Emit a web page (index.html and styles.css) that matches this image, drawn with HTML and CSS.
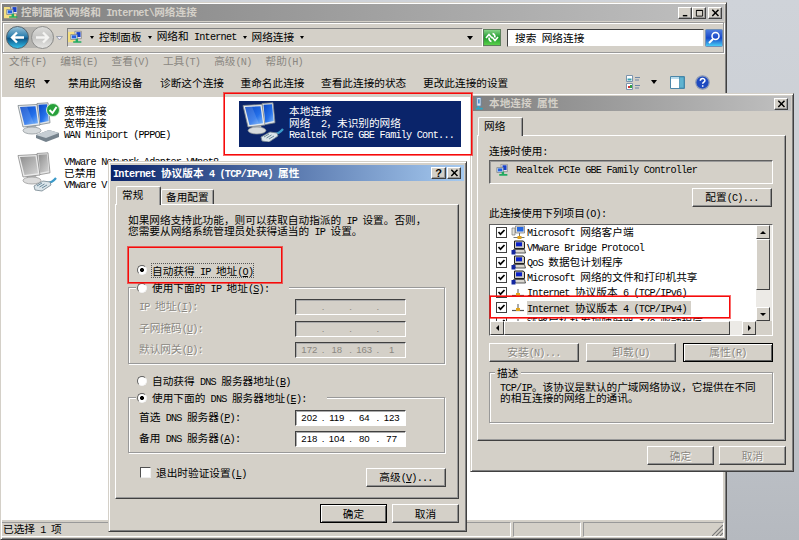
FILE: index.html
```html
<!DOCTYPE html>
<html lang="zh-CN">
<head>
<meta charset="utf-8">
<title>网络连接</title>
<link rel="stylesheet" href="styles.css">
</head>
<body>
<svg class="defs" width="0" height="0">
  <defs>
    <linearGradient id="scr" x1="0" y1="0" x2="1" y2="1"><stop offset="0" stop-color="#0846c4"/><stop offset=".6" stop-color="#2470ea"/><stop offset="1" stop-color="#84bcfa"/></linearGradient>
    <linearGradient id="gscr" x1="0" y1="0" x2="1" y2="1"><stop offset="0" stop-color="#8e8e8e"/><stop offset="1" stop-color="#d4d4d4"/></linearGradient>
    <linearGradient id="ball" x1="0" y1="0" x2="0" y2="1"><stop offset="0" stop-color="#9cc4da"/><stop offset=".45" stop-color="#2d7fae"/><stop offset=".55" stop-color="#0c5689"/><stop offset="1" stop-color="#35c4ee"/></linearGradient>
    <linearGradient id="gball" x1="0" y1="0" x2="0" y2="1"><stop offset="0" stop-color="#dcdcda"/><stop offset=".5" stop-color="#c4c4c2"/><stop offset="1" stop-color="#e6e6e4"/></linearGradient>
    <linearGradient id="btnblue" x1="0" y1="0" x2="0" y2="1"><stop offset="0" stop-color="#4f7fe0"/><stop offset=".5" stop-color="#1746c8"/><stop offset="1" stop-color="#4ad4f8"/></linearGradient>
    <linearGradient id="btngreen" x1="0" y1="0" x2="0" y2="1"><stop offset="0" stop-color="#8fd88f"/><stop offset=".5" stop-color="#1c9a2c"/><stop offset="1" stop-color="#5fd44c"/></linearGradient>
    <symbol id="pcs" viewBox="0 0 44 40">
      <path d="M20 1.500l11-.7 2 20-11 2z" fill="#dfe4e8" stroke="#7d868c" stroke-width=".8"/><path d="M21.500 2.800l8.500-.6 1.700 16.800-8.500 1.700z" fill="url(#scr)"/>
      <path d="M11 22l8 1 1 5H9l1-3z" fill="#b5bbbf"/><ellipse cx="15" cy="28.500" rx="9" ry="3.500" fill="#d6dadc" stroke="#878e92" stroke-width=".7"/>
      <path d="M1 3.500l19-1 3 20.500-17 2z" fill="#e6eaed" stroke="#7d868c" stroke-width=".8"/><path d="M3 5l15.500-.7 2.500 17-13.500 1.700z" fill="url(#scr)"/><path d="M3 5l7-.4 7 17.200-9.500 1.200z" fill="#fff" opacity=".14"/>
    </symbol>
    <symbol id="gpcs" viewBox="0 0 44 40">
      <path d="M20 1.500l11-.7 2 20-11 2z" fill="#e8e8e8" stroke="#8b8b8b" stroke-width=".8"/><path d="M21.500 2.800l8.500-.6 1.700 16.800-8.500 1.700z" fill="url(#gscr)"/>
      <path d="M11 22l8 1 1 5H9l1-3z" fill="#bbb"/><ellipse cx="15" cy="28.500" rx="9" ry="3.500" fill="#dcdcdc" stroke="#909090" stroke-width=".7"/>
      <path d="M1 3.500l19-1 3 20.500-17 2z" fill="#ebebeb" stroke="#8b8b8b" stroke-width=".8"/><path d="M3 5l15.500-.7 2.500 17-13.500 1.700z" fill="url(#gscr)"/>
    </symbol>
    <symbol id="plug" viewBox="0 0 24 16">
      <path d="M14 7Q19 7 23 2" fill="none" stroke="#3b9ac9" stroke-width="2.200"/>
      <path d="M1 10l9-5 7 1 1 3-9 6-7-1z" fill="#dbe5ea" stroke="#74848e" stroke-width=".8"/><path d="M4 10l5-3M6.500 11l5-3M9 12l5-3" stroke="#5d7f93" stroke-width=".9"/>
    </symbol>
    <symbol id="net" viewBox="0 0 16 16">
      <path d="M6 1h8v9H7z" fill="#e8e8ee" stroke="#777" stroke-width=".8"/><path d="M8 2h5v6H8z" fill="#1740c8"/>
      <path d="M1 5h8v6H1z" fill="#b9d2f0" stroke="#777" stroke-width=".8"/><path d="M2.500 6h5v3.500h-5z" fill="#2560e0"/>
      <path d="M7 10h3v3h4v2H4v-2h3z" fill="#22aa60"/>
    </symbol>
    <symbol id="svc" viewBox="0 0 15 15">
      <path d="M3.500 1h8.500l1.500 1v6.500H3.500z" fill="#cbc8c0" stroke="#222"/><path d="M5 2.300h6v4H5z" fill="#0a20c8"/>
      <path d="M2.500 9.500h11l1 3.500h-10z" fill="#dad7d0" stroke="#333" stroke-width=".8"/><path d="M.5 10h4v4.500h-4z" fill="#1428a0"/>
    </symbol>
    <symbol id="proto" viewBox="0 0 12 8">
      <path d="M6 0v4" stroke="#555"/><path d="M0 6.500h12" stroke="#555" stroke-width="1.200"/><path d="M4 4h4v3H4z" fill="#e0a41c"/>
    </symbol>
    <symbol id="client" viewBox="0 0 14 15">
      <path d="M4 1h9v7H4z" fill="#ddd" stroke="#777" stroke-width=".7"/><path d="M5.500 2h6.500v4.500H5.500z" fill="#2466e0"/><path d="M.5 3h3v7h-3z" fill="#e4e4dc" stroke="#777" stroke-width=".7"/>
      <path d="M8 8v4M2 12.500h11" stroke="#777"/><path d="M6 11h4v3H6z" fill="#e0a41c"/>
    </symbol>
    <symbol id="x" viewBox="0 0 8 8"><path d="M.8.8l6.200 6.200M7 .8L.8 7" stroke="#000" stroke-width="1.500"/></symbol>
    <symbol id="chk" viewBox="0 0 9 9"><path d="M1.500 4l2 2.200L7.500 2" fill="none" stroke="#000" stroke-width="1.700"/></symbol>
  </defs>
</svg>

<main class="desktop">
<section class="win explorer">
  <header class="title grey">
    <svg class="ticon" viewBox="0 0 16 16"><path d="M0 2h6l1 2h6v10H0z" fill="#f4df82"/><use href="#net" width="14" height="15" x="2"/></svg>
    <span class="tt">控制面板<span class="en">\</span>网络和<span class="en"> Internet\</span>网络连接</span>
    <span class="cap"><svg viewBox="0 0 10 9"><path d="M2 7.500h5" stroke="#000" stroke-width="1.600"/></svg></span>
    <span class="cap"><svg viewBox="0 0 10 9"><path d="M1.500 1.500h7v6.500h-7zM1.500 1.700h7" fill="none" stroke="#000"/></svg></span>
    <span class="cap close"><svg viewBox="0 0 8 8"><use href="#x"/></svg></span>
  </header>
  <div class="nav">
    <svg class="balls" viewBox="0 0 58 26">
      <rect x="1" y="2" width="48" height="21" rx="10.500" fill="#b4b3af"/>
      <circle cx="12.500" cy="12.500" r="11" fill="url(#ball)" stroke="#57646c"/><path d="M19 12.500H8M12 7.500l-5 5 5 5" fill="none" stroke="#fff" stroke-width="2.300"/>
      <circle cx="37.500" cy="12.500" r="11" fill="url(#gball)" stroke="#8d8d8b"/><path d="M31 12.500h11M38 7.500l5 5-5 5" fill="none" stroke="#f4f4f2" stroke-width="2.300"/>
      <path d="M51.500 11.500h6l-3 3.500z" fill="#eef" stroke="#8890a0" stroke-width=".8"/>
    </svg>
    <div class="addr">
      <svg class="aicon" viewBox="0 0 16 16"><path d="M0 2h7v11H0z" fill="#f4df82"/><use href="#net" width="14" height="15" x="2"/></svg>
      <i class="tri"></i><span>控制面板</span><i class="tri"></i><span>网络和<span class="en"> Internet</span></span><i class="tri"></i><span>网络连接</span><i class="tri"></i><i class="tri big"></i>
    </div>
    <svg class="refresh" viewBox="0 0 18 17"><rect x=".5" y=".5" width="17" height="16" fill="url(#btngreen)" stroke="#5d7f5c"/><path d="M8.500 12.500Q6 12 6 8.500M3 9l3-3.500L9 9M9.500 4.500Q12 5 12 8.500M9 8l3 3.500L15 8" fill="none" stroke="#fff" stroke-width="1.700"/></svg>
    <div class="search">搜索<span class="en"> </span>网络连接</div>
    <svg class="go" viewBox="0 0 18 18"><rect x=".5" y=".5" width="17" height="17" rx="1" fill="url(#btnblue)" stroke="#6f8fb8"/><circle cx="10.500" cy="7" r="3.500" fill="none" stroke="#fff" stroke-width="1.500"/><path d="M8 10l-4 4" stroke="#fff" stroke-width="2"/></svg>
  </div>
  <nav class="menu"><span>文件<span class="en">(F)</span></span><span>编辑<span class="en">(E)</span></span><span>查看<span class="en">(V)</span></span><span>工具<span class="en">(T)</span></span><span>高级<span class="en">(N)</span></span><span>帮助<span class="en">(H)</span></span></nav>
  <div class="tools">
    <span class="org">组织<i class="tri big"></i></span><span class="t2">禁用此网络设备</span><span class="t3">诊断这个连接</span><span class="t4">重命名此连接</span><span class="t5">查看此连接的状态</span><span class="t6">更改此连接的设置</span>
    <div class="views">
      <svg width="14" height="15" viewBox="0 0 14 15"><path d="M.5.500h6v6h-6zM.5 8.500h6v6h-6z" fill="#fff" stroke="#7b93ad"/><path d="M1.500 3.500h4v2h-4z" fill="#38a0b0"/><path d="M2 11h2v2H2z" fill="#d03030"/><path d="M4 10h2v3H4z" fill="#30a040"/><path d="M9 2.500h5M9 5h4M9 10.500h5M9 13h4" stroke="#6e88a8"/></svg>
      <i class="tri big"></i>
      <svg class="pane" width="15" height="13" viewBox="0 0 15 13"><path d="M.5.500h14v12H.5z" fill="#fff" stroke="#4c86a8"/><path d="M1 1h13v2H1z" fill="#b9dced"/><path d="M9.500 1h4.500v11H9.500z" fill="#5fb3d0" stroke="#3d88aa" stroke-width=".7"/></svg>
      <svg width="15" height="15" viewBox="0 0 15 15"><circle cx="7.500" cy="7.500" r="6.700" fill="#1d49c0" stroke="#8e9bb5" stroke-width="1.200"/><path d="M5.300 5.800c0-3 4.600-3 4.600-.3 0 1.600-2.200 1.600-2.200 3.300M7.700 10.300v1.500" fill="none" stroke="#fff" stroke-width="1.500"/></svg>
    </div>
  </div>
  <div class="content">
    <div class="item i1">
      <svg viewBox="0 0 44 40"><use href="#pcs" width="44" height="40"/><path d="M19 33l13-5 10 3v4l-13 5-10-4z" fill="#75828c"/><path d="M19 33l13-5 10 3-13 5z" fill="#c6ced4"/><circle cx="36" cy="8" r="6.500" fill="#27a03a" stroke="#d8efd8"/><path d="M32.500 8l3 3 4-6" fill="none" stroke="#fff" stroke-width="2"/></svg>
      <div class="lines"><p>宽带连接</p><p>宽带连接</p><p><span class="en">WAN Miniport (PPPOE)</span></p></div>
    </div>
    <div class="item sel">
      <svg viewBox="0 0 44 40"><use href="#pcs" width="44" height="40"/><use href="#plug" x="18" y="25" width="24" height="16"/></svg>
      <div class="lines"><p>本地连接</p><p>网络<span class="en">  2</span>，未识别的网络</p><p><span class="en">Realtek PCIe GBE Family Cont...</span></p></div>
    </div>
    <div class="item i2">
      <svg viewBox="0 0 44 40"><use href="#gpcs" width="44" height="40"/><use href="#plug" x="16" y="24" width="24" height="16"/></svg>
      <div class="lines"><p><span class="en">VMware Network Adapter VMnet8</span></p><p>已禁用</p><p><span class="en">VMware V</span></p></div>
    </div>
  </div>
  <footer class="status"><span class="s1">已选择<span class="en"> 1 </span>项</span><span class="s2"></span><span class="s3"><svg width="11" height="11" viewBox="0 0 11 11"><path d="M0 11L11 0M4 11l7-7M8 11l3-3" stroke="#777" stroke-width="1.100"/></svg></span></footer>
</section>

<section class="win props">
  <header class="title grey">
    <svg class="ticon" viewBox="0 0 14 16"><path d="M2 1h5v10H2z" fill="#dbe7f3" stroke="#6685a8"/><path d="M3.500 3h2v5h-2z" fill="#4a8fd0"/><path d="M4 11v3M1 14h8" stroke="#2aa8c8" stroke-width="2"/></svg>
    <span class="tt">本地连接<span class="en"> </span>属性</span>
    <span class="cap"><svg viewBox="0 0 8 8"><use href="#x"/></svg></span>
  </header>
  <div class="tabs"><span class="tab on">网络</span></div>
  <div class="panel">
    <p class="lb">连接时使用<span class="en">:</span></p>
    <div class="adapter"><svg viewBox="0 0 16 16"><use href="#net"/></svg><span class="en">Realtek PCIe GBE Family Controller</span></div>
    <button class="btn conf">配置<span class="en">(C)...</span></button>
    <p class="lb second">此连接使用下列项目<span class="en">(O):</span></p>
    <div class="list">
      <div class="rows">
        <div class="r"><svg class="cb"><use href="#chk"/></svg><svg class="ic"><use href="#client"/></svg><span><span class="en">Microsoft </span>网络客户端</span></div>
        <div class="r"><svg class="cb"><use href="#chk"/></svg><svg class="ic"><use href="#svc"/></svg><span><span class="en">VMware Bridge Protocol</span></span></div>
        <div class="r"><svg class="cb"><use href="#chk"/></svg><svg class="ic"><use href="#svc"/></svg><span><span class="en">QoS </span>数据包计划程序</span></div>
        <div class="r"><svg class="cb"><use href="#chk"/></svg><svg class="ic"><use href="#svc"/></svg><span><span class="en">Microsoft </span>网络的文件和打印机共享</span></div>
        <div class="r"><svg class="cb"><use href="#chk"/></svg><svg class="ic sm"><use href="#proto"/></svg><span><span class="en">Internet </span>协议版本<span class="en"> 6 (TCP/IPv6)</span></span></div>
        <div class="r"><svg class="cb"><use href="#chk"/></svg><svg class="ic sm"><use href="#proto"/></svg><span class="hl"><span class="en">Internet </span>协议版本<span class="en"> 4 (TCP/IPv4)</span></span></div>
        <div class="r"><svg class="cb"><use href="#chk"/></svg><svg class="ic sm"><use href="#proto"/></svg><span>链路层拓扑发现映射器<span class="en"> I/O </span>驱动程序</span></div>
      </div>
      <div class="vs"><i class="sb"><b class="up"></b></i><i class="sb vthumb"></i><i class="sb end"><b class="down"></b></i></div>
      <div class="hs"><i class="sb"><b class="left"></b></i><i class="sb hthumb"></i><i class="sb end"><b class="right"></b></i></div>
      <div class="corner"></div>
    </div>
    <div class="three"><button class="btn dis">安装<span class="en">(N)...</span></button><button class="btn dis">卸载<span class="en">(U)</span></button><button class="btn dis def">属性<span class="en">(R)</span></button></div>
    <div class="group desc"><span class="legend">描述</span><p><span class="en">TCP/IP</span>。该协议是默认的广域网络协议，它提供在不同</p><p>的相互连接的网络上的通讯。</p></div>
  </div>
  <div class="foot"><button class="btn dis">确定</button><button class="btn dis">取消</button></div>
</section>

<section class="win tcp">
  <header class="title blue">
    <span class="tt"><span class="en">Internet </span>协议版本<span class="en"> 4 (TCP/IPv4) </span>属性</span>
    <span class="cap q">?</span><span class="cap"><svg viewBox="0 0 8 8"><use href="#x"/></svg></span>
  </header>
  <div class="tabs"><span class="tab on">常规</span><span class="tab">备用配置</span></div>
  <div class="panel">
    <div class="para"><p>如果网络支持此功能，则可以获取自动指派的<span class="en"> IP </span>设置。否则，</p><p>您需要从网络系统管理员处获得适当的<span class="en"> IP </span>设置。</p></div>
    <label class="radio auto"><i class="dot on"></i><span class="focus">自动获得<span class="en"> IP </span>地址<span class="en">(<u>O</u>)</span></span></label>
    <div class="group ip">
      <label class="radio"><i class="dot"></i><span>使用下面的<span class="en"> IP </span>地址<span class="en">(<u>S</u>):</span></span></label>
      <div class="f dim"><span><span class="en">IP </span>地址<span class="en">(<u>I</u>):</span></span><span class="inp"><b></b>.<b></b>.<b></b>.<b></b></span></div>
      <div class="f dim"><span>子网掩码<span class="en">(<u>U</u>):</span></span><span class="inp"><b></b>.<b></b>.<b></b>.<b></b></span></div>
      <div class="f dim"><span>默认网关<span class="en">(<u>D</u>):</span></span><span class="inp"><b>172</b>.<b>18</b>.<b>163</b>.<b>1</b></span></div>
    </div>
    <label class="radio dnsauto"><i class="dot"></i><span>自动获得<span class="en"> DNS </span>服务器地址<span class="en">(<u>B</u>)</span></span></label>
    <div class="group dns">
      <label class="radio"><i class="dot on"></i><span>使用下面的<span class="en"> DNS </span>服务器地址<span class="en">(<u>E</u>):</span></span></label>
      <div class="f"><span>首选<span class="en"> DNS </span>服务器<span class="en">(<u>P</u>):</span></span><span class="inp"><b>202</b>.<b>119</b>.<b>64</b>.<b>123</b></span></div>
      <div class="f"><span>备用<span class="en"> DNS </span>服务器<span class="en">(<u>A</u>):</span></span><span class="inp"><b>218</b>.<b>104</b>.<b>80</b>.<b>77</b></span></div>
    </div>
    <div class="last"><label class="verify"><i class="box"></i><span>退出时验证设置<span class="en">(<u>L</u>)</span></span></label><button class="btn adv">高级<span class="en">(<u>V</u>)...</span></button></div>
  </div>
  <div class="foot"><button class="btn def">确定</button><button class="btn">取消</button></div>
</section>

<div class="mark m1"></div><div class="mark m2"></div><div class="mark m3"></div>
</main>
</body>
</html>
```
FILE: styles.css
```css
* { box-sizing: border-box; }
body, p { margin: 0; }
body, button { font: 10.67px "Noto Sans CJK SC", sans-serif; color: #000; }
i, b { font-style: normal; font-weight: inherit; }
.defs { display: block; }
svg { flex: none; display: block; }
.en { font-family: "Liberation Mono", monospace; font-size: 10.2px; letter-spacing: -.79px; white-space: pre; }
.desktop { position: relative; width: 799px; height: 540px; overflow: hidden; background: linear-gradient(#cfd3d9, #c9cdd2 50%, #b5b9bf); white-space: nowrap; }

/* window frames */
.win { position: absolute; display: flex; flex-direction: column; background: #d4d0c8; border: 1px solid; border-color: #d4d0c8 #404040 #404040 #d4d0c8; box-shadow: inset 1px 1px #fff, inset -1px -1px #808080; }
.explorer { left: 0; top: 2px; width: 727px; height: 538px; padding: 1px 2px 1px 1px; }
.props { left: 470px; top: 93px; width: 324px; height: 379px; padding: 2px; }
.tcp { left: 108px; top: 161px; width: 359px; height: 371px; padding: 3px 2px 2px; }
.title { flex: none; display: flex; align-items: center; height: 16px; padding: 0 2px; color: #d4d0c8; font-weight: bold; }
.title.grey { background: linear-gradient(90deg, #808080, #c0c0c0); }
.title.blue { background: linear-gradient(90deg, #0a246a, #a6caf0); color: #fff; }
.tt { flex: 1; line-height: 16px; }
.ticon { width: 15px; height: 15px; margin-right: 2px; }
.cap { width: 14px; height: 12px; display: flex; align-items: center; justify-content: center; color: #000; background: #d4d0c8; border: 1px solid; border-color: #fff #404040 #404040 #fff; box-shadow: inset -1px -1px #999; font: bold 11px/10px "Liberation Sans", sans-serif; }
.cap svg { width: 9px; height: 8px; }
.cap.close { margin-left: 2px; }
.cap.q { margin-right: 1px; width: 15px; }

/* explorer */
.explorer .title { height: 17px; }
.nav { flex: none; height: 31px; margin-top: 1px; display: flex; align-items: center; border: 1px solid #999; box-shadow: inset 1px 1px #fff, 1px 1px #fff; padding-left: 2px; }
.balls { width: 58px; height: 26px; }
.addr { display: flex; align-items: center; width: 416px; height: 19px; margin-left: 4px; border: 1px solid; border-color: #808080 #fff #fff #808080; }
.addr > span { line-height: 15px; padding-bottom: 2px; }
.aicon { width: 15px; height: 15px; margin-right: 7px; }
.tri { flex: none; border: solid transparent; border-width: 3px 2.5px 0; border-top-color: #000; margin: 0 5px 0 6px; }
.tri:first-of-type { margin-left: 0; }
.tri.big { border-width: 4px 3.500px 0; margin: 0 9px 0 auto; }
.refresh { width: 18px; height: 17px; }
.search { width: 197px; height: 18px; margin-left: 6px; padding-left: 7px; background: #fff; border: 1px solid; border-color: #404040 #d4d0c8 #d4d0c8 #404040; line-height: 15px; }
.go { width: 18px; height: 18px; margin-left: 1px; }
.menu { flex: none; height: 18px; line-height: 16px; display: flex; padding-left: 7px; color: #8a8781; }
.menu > span { width: 51.3px; }
.tools { flex: none; display: flex; align-items: center; height: 26px; padding: 0 0 4px 12px; }
.org { display: flex; align-items: center; width: 54px; }
.org .tri { margin: 0 0 0 9px; }
.t2 { width: 92px; } .t3, .t4 { width: 80.500px; } .t5 { width: 102px; } .t6 { width: 203px; }
.views { display: flex; align-items: center; }
.views .tri.big { margin: 0 13px 0 11px; }
.pane { margin-right: 10px; }
.content { flex: 1; background: #fff; display: grid; grid-template: 50px 50px / 237px 224px; padding: 4px 0 0; margin-right: 1px; }
.item { display: flex; align-items: flex-start; padding-left: 15px; }
.item svg { width: 44px; height: 40px; margin-top: 1px; }
.lines { margin: 4px 0 0 3px; }
.lines p { height: 11.700px; line-height: 12px; }
.sel { height: 46px; width: 222px; background: #0a246a; color: #fff; padding-left: 3px; }
.status { flex: none; height: 18px; display: flex; gap: 2px; padding-top: 2px; line-height: 12px; }
.status > span { border: 1px solid; border-color: #999 #fff #fff #999; height: 15px; }
.s1 { width: 509px; border-left: 0 !important; padding-left: 1px; }
.s2 { width: 68px; }
.s3 { flex: 1; display: flex; align-items: flex-end; justify-content: flex-end; }

/* tabs and panels */
.tabs { display: flex; align-items: flex-end; height: 19px; margin: 6px 4px 0 5px; flex: none; }
.tab { height: 15px; line-height: 14px; padding: 0 4px; border: 1px solid; border-color: #fff #404040 transparent #fff; border-bottom: 0; border-radius: 2px 2px 0 0; box-shadow: inset -1px 0 #999; }
.tab.on { width: 45px; height: 19px; line-height: 16px; padding-left: 5px; margin-bottom: -1px; background: #d4d0c8; position: relative; z-index: 1; }
.panel { flex: none; margin: 0 5px 0 4px; border: 1px solid; border-color: #fff #404040 #404040 #fff; box-shadow: inset -1px -1px #999; display: flex; flex-direction: column; }
.btn { display: block; height: 19px; padding: 0; line-height: 14px; background: #d4d0c8; border: 1px solid; border-color: #fff #404040 #404040 #fff; border-radius: 0; box-shadow: inset -1px -1px #909090; text-align: center; }
.btn.def { border: 1px solid #000; box-shadow: inset 1px 1px #fff, inset -1px -1px #606060; }
.dis, .dim { color: #8b8882; text-shadow: 1px 1px #fff; }
.foot { display: flex; gap: 5px; justify-content: flex-end; padding-right: 5px; margin-top: 5px; }
.foot .btn { width: 67px; }
.group { border: 1px solid #999; box-shadow: inset 1px 1px #fff, 1px 1px #fff; }

/* adapter properties */
.props .title { height: 15px; padding: 0 3px 0 2px; }
.props .ticon { width: 12px; }
.props .tabs { margin-top: 6px; height: 18px; }
.props .panel { height: 306px; padding: 9px 12px 0 11px; }
.lb { height: 12px; line-height: 12px; }
.adapter { margin-top: 3px; height: 24px; display: flex; align-items: center; gap: 7px; padding: 0 0 4px 6px; border: 1px solid; border-color: #606060 #fff #fff #606060; box-shadow: inset 1px 1px #999; width: 284px; }
.adapter svg { width: 13px; height: 14px; }
.conf { width: 80px; margin: 4px 0 0 203px; }
.second { margin-top: 0; }
.list { height: 112px; width: 284px; margin-top: 5px; flex: none; display: grid; grid-template: 96px 14px / 266px 16px; background: #fff; border: 1px solid; border-color: #606060 #fff #fff #606060; }
.rows { overflow: hidden; }
.r { display: flex; align-items: center; height: 15px; line-height: 15px; padding-left: 6px; }
.cb { width: 11px; height: 11px; border: 1px solid #404040; background: #fff; }
.ic { width: 15px; height: 15px; margin: 0 1px 0 4px; }
.ic.sm { width: 12px; height: 8px; margin: 0 3px 0 5px; }
.hl { background: #d4d0c8; padding-right: 4px; height: 14px; line-height: 14px; }
.vs, .hs { display: flex; background: #eceae6; }
.vs { flex-direction: column; }
.corner { background: #d4d0c8; }
.sb { flex: none; width: 14px; height: 14px; display: flex; align-items: center; justify-content: center; background: #d4d0c8; border: 1px solid; border-color: #fff #404040 #404040 #fff; }
.sb.end { margin: auto 0 0; }
.hs .sb.end { margin: 0 0 0 auto; }
.vthumb { height: 51px; } .hthumb { width: 226px; }
.up { border: 3px solid transparent; border-top: 0; border-bottom-color: #000; }
.down { border: 3px solid transparent; border-bottom: 0; border-top-color: #000; }
.left { border: 3px solid transparent; border-left: 0; border-right-color: #000; }
.right { border: 3px solid transparent; border-right: 0; border-left-color: #000; }
.three { display: flex; justify-content: space-between; width: 284px; margin-top: 7px; }
.three .btn { width: 90px; }
.desc { width: 284px; height: 51px; margin-top: 10px; padding-left: 10px; flex: none; }
.desc .legend { display: block; width: 26px; height: 12px; line-height: 12px; margin: -6px 0 2px -5px; padding-left: 2px; background: #d4d0c8; }
.desc p { height: 11px; line-height: 11px; }

/* tcp/ip properties */
.tcp .tabs { height: 18px; margin-top: 5px; }
.tcp .panel { height: 295px; padding: 9px 12px 0; }
.tcp .title { padding-right: 3px; }
.tcp .tt { line-height: 15px; }
.para p { height: 11px; line-height: 11px; }
.radio { display: flex; align-items: center; height: 14px; line-height: 13px; }
.dot { width: 10px; height: 10px; border-radius: 50%; border: 1px solid; border-color: #606060 #f4f4f4 #f4f4f4 #606060; background: #fff; margin-right: 5px; }
.dot.on { background: radial-gradient(circle, #000 0 1.700px, #fff 2.300px); }
.auto { margin: 27px 0 0 9px; }
.focus { outline: 1px dotted #555; height: 13px; }
.tcp .group { width: 317px; flex: none; }
.tcp .group .radio { width: max-content; margin: -7px 0 0 7px; padding: 0 20px 0 1px; background: #d4d0c8; }
.ip { height: 77px; margin-top: 10px; }
.dnsauto { margin: 10px 0 0 9px; }
.dns { height: 56px; margin-top: 9px; }
.f { display: flex; align-items: center; justify-content: space-between; height: 16px; margin: 4px 38px 5px 10px; line-height: 16px; }
.f + .f { margin-top: 5.500px; }
.dns .f { margin-top: 5px; }
.inp { display: flex; align-items: center; width: 111px; height: 16px; padding: 0 1px; border: 1px solid; border-color: #404040 #fff #fff #404040; background: #fff; font: 9.600px/14px "Liberation Sans", sans-serif; box-shadow: inset 1px 1px #aaa; }
.inp b { flex: 1; text-align: center; }
.dim .inp { background: #d4d0c8; text-shadow: none; }
.last { display: flex; justify-content: space-between; margin-top: 13px; width: 318px; }
.verify { display: flex; align-items: center; height: 13px; padding-left: 12px; }
.box { width: 11px; height: 11px; background: #fff; border: 1px solid; border-color: #505050 #eee #eee #505050; margin-right: 5px; }
.adv { width: 80px; margin-top: 2px; }

/* highlight frames */
.mark { position: absolute; border: 1px solid #f60a0a; outline: 1px solid #f60a0a99; }
.m1 { left: 224px; top: 93px; width: 248px; height: 62px; }
.m2 { left: 128px; top: 247px; width: 154px; height: 36px; }
.m3 { left: 490px; top: 296px; width: 240px; height: 22px; }
```
